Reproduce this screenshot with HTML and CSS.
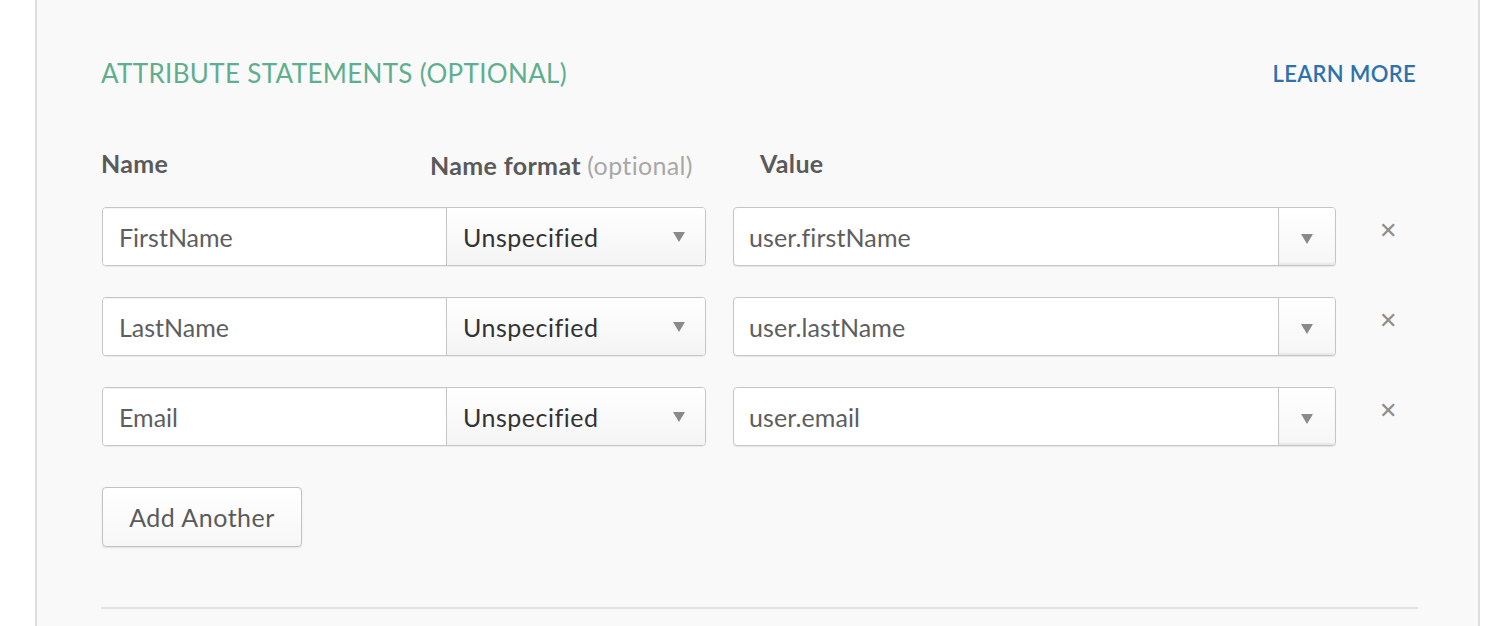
FILE: index.html
```html
<!DOCTYPE html>
<html>
<head>
<meta charset="utf-8">
<link rel="stylesheet" href="styles.css">
</head>
<body>
<div class="panel">
  <div class="section-head">
    <h2 class="title">ATTRIBUTE STATEMENTS (OPTIONAL)</h2>
    <a class="learn" href="#">LEARN MORE</a>
  </div>
  <div class="col-heads">
    <div class="ch ch-name">Name</div>
    <div class="ch ch-format">Name format <span class="opt">(optional)</span></div>
    <div class="ch ch-value">Value</div>
  </div>
  <div class="rows">
    <div class="row">
      <div class="name-group">
        <div class="name-input">FirstName</div>
        <div class="format-select">Unspecified<span class="caret"></span></div>
      </div>
      <div class="value-combo">
        <div class="value-text">user.firstName</div>
        <div class="value-btn"><span class="caret"></span></div>
      </div>
      <div class="remove">&#x2715;</div>
    </div>
    <div class="row">
      <div class="name-group">
        <div class="name-input">LastName</div>
        <div class="format-select">Unspecified<span class="caret"></span></div>
      </div>
      <div class="value-combo">
        <div class="value-text">user.lastName</div>
        <div class="value-btn"><span class="caret"></span></div>
      </div>
      <div class="remove">&#x2715;</div>
    </div>
    <div class="row">
      <div class="name-group">
        <div class="name-input">Email</div>
        <div class="format-select">Unspecified<span class="caret"></span></div>
      </div>
      <div class="value-combo">
        <div class="value-text">user.email</div>
        <div class="value-btn"><span class="caret"></span></div>
      </div>
      <div class="remove">&#x2715;</div>
    </div>
  </div>
  <button class="add-btn">Add Another</button>
  <div class="divider"></div>
</div>
</body>
</html>
```
FILE: styles.css
```css
html, body {
  margin: 0;
  padding: 0;
  background: #ffffff;
  height: 100%;
  overflow: hidden;
}
body {
  font-family: Lato, "Open Sans", sans-serif;
  color: #5c5c5c;
}
.panel {
  margin-left: 35px;
  min-height: 700px;
  background: #f9f9f9;
  border-left: 2px solid #dedede;
  border-right: 2px solid #dedede;
  padding: 56px 60px 0 64px;
  box-sizing: content-box;
  width: 1317px;
}
.section-head {
  display: flex;
  justify-content: space-between;
  align-items: center;
  height: 34px;
}
.title {
  margin: 0;
  font-weight: 400;
  font-size: 26px;
  color: #5fae8e;
  letter-spacing: 0.33px;
}
.learn {
  font-size: 22px;
  font-weight: 600;
  color: #2e72ad;
  text-decoration: none;
  letter-spacing: 0.3px;
  margin-right: 2px;
}
.col-heads {
  display: flex;
  margin-top: 56px;
  height: 34px;
  align-items: center;
}
.ch {
  font-size: 25px;
  font-weight: 700;
  letter-spacing: 0.35px;
  color: #5a5a5a;
}
.ch-name { width: 329px; }
.ch-format { width: 330px; position: relative; top: 2px; }
.opt { font-weight: 400; color: #a8a8a8; }
.rows {
  margin-top: 27px;
  display: flex;
  flex-direction: column;
  gap: 31px;
}
.row {
  display: flex;
  align-items: center;
  height: 59px;
  margin-left: 1px;
}
.name-group {
  display: flex;
  width: 604px;
  height: 59px;
  border: 1px solid #c6c6c6;
  border-radius: 4px;
  box-sizing: border-box;
  overflow: hidden;
  background: #fff;
  box-shadow: 0 1px 1px rgba(0,0,0,0.06);
}
.name-input {
  width: 344px;
  border-right: 1px solid #c6c6c6;
  box-sizing: border-box;
  padding-left: 16px;
  display: flex;
  align-items: center;
  font-size: 25px;
  color: #5e5e5e;
  background: #fff;
  box-shadow: inset 0 1px 1px rgba(0,0,0,0.05);
}
.format-select {
  flex: 1;
  display: flex;
  align-items: center;
  justify-content: space-between;
  padding: 0 20px 0 16px;
  font-size: 25px;
  letter-spacing: 0.5px;
  color: #333;
  background: linear-gradient(#ffffff, #f4f4f4);
}
.caret {
  width: 0;
  height: 0;
  border-left: 6px solid transparent;
  border-right: 6px solid transparent;
  border-top: 10px solid #8a8a8a;
}
.value-combo {
  margin-left: 27px;
  width: 603px;
  height: 59px;
  display: flex;
  border: 1px solid #c6c6c6;
  border-radius: 4px;
  box-sizing: border-box;
  background: #fff;
  overflow: hidden;
  box-shadow: 0 1px 1px rgba(0,0,0,0.08);
}
.value-text {
  flex: 1;
  display: flex;
  align-items: center;
  padding-left: 15px;
  font-size: 25px;
  letter-spacing: 0.1px;
  color: #5e5e5e;
}
.value-btn {
  width: 57px;
  border-left: 1px solid #c6c6c6;
  display: flex;
  align-items: center;
  justify-content: center;
  padding-top: 4px;
  box-sizing: border-box;
  background: linear-gradient(#ffffff, #f6f6f6);
  box-shadow: inset 0 -2px 2px rgba(0,0,0,0.06);
}
.remove {
  margin-left: 42px;
  margin-top: -14px;
  font-size: 22px;
  color: #8e8e8e;
  width: 20px;
  text-align: center;
}
.add-btn {
  margin-top: 41px;
  margin-left: 1px;
  width: 200px;
  height: 60px;
  border: 1px solid #c2c2c2;
  border-radius: 4px;
  background: linear-gradient(#ffffff, #f7f7f7);
  box-shadow: 0 1px 2px rgba(0,0,0,0.1);
  font-family: Lato, "Open Sans", sans-serif;
  font-size: 25px;
  letter-spacing: 0.5px;
  color: #5a5a5a;
  padding: 0;
  display: block;
}
.divider {
  margin-top: 60px;
  height: 2px;
  background: #e2e2e2;
}
```
